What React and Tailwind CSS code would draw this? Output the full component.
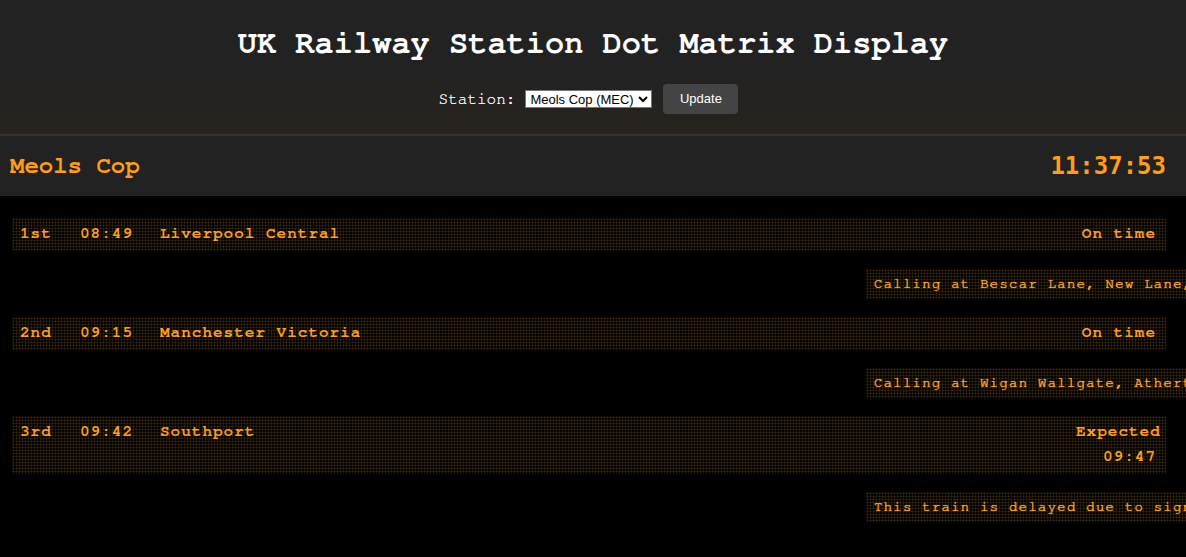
import { useState } from "react";

const services = [
  {
    pos: "1st",
    time: "08:49",
    dest: "Liverpool Central",
    status: "On time",
    calling: "Calling at Bescar Lane, New Lane, Burscough Bridge, Hoscar, Parbold, Appley Bridge, Gathurst, Orrell, Pemberton, Wigan Wallgate",
  },
  {
    pos: "2nd",
    time: "09:15",
    dest: "Manchester Victoria",
    status: "On time",
    calling: "Calling at Wigan Wallgate, Atherton, Walkden, Salford Crescent, Salford Central, Manchester Victoria",
  },
  {
    pos: "3rd",
    time: "09:42",
    dest: "Southport",
    status: "Expected 09:47",
    calling: "This train is delayed due to signalling problems",
  },
];

const dots =
  "bg-[#050302] bg-[radial-gradient(circle,#37280c_0.8px,transparent_1.2px)] bg-size-[3px_3px]";

const mono = "font-['Nimbus_Mono_PS','FreeMono','Courier_New','Liberation_Mono',monospace]";

const App = () => {
  const [station, setStation] = useState("MEC");

  return (
    <div className="min-h-screen w-full overflow-hidden bg-black">
      {/* header */}
      <div className="bg-linear-to-b from-[#222222] via-[#222222] to-[#27231e] pt-[25px] pb-[20px] border-b-2 border-[#37332e]">
        <h1 className={`text-center text-white text-[32px] leading-[36px] font-bold ${mono}`}>
          UK Railway Station Dot Matrix Display
        </h1>
        <div className="mt-[23px] flex items-center justify-center h-[30px]">
          <label className={`text-[#f2f2f2] text-[16px] mr-[10px] [text-shadow:0_0_0.6px_#ffffff] ${mono}`}>
            Station:
          </label>
          <select
            value={station}
            onChange={(e) => setStation(e.target.value)}
            className="bg-white text-black text-[13px] h-[18px] w-[127px] border border-[#767676] font-['Liberation_Sans',Arial,sans-serif]"
          >
            <option value="MEC">Meols Cop (MEC)</option>
            <option value="SOP">Southport (SOP)</option>
            <option value="LIV">Liverpool Central (LVC)</option>
          </select>
          <button className="ml-[11px] mr-[9px] h-[30px] w-[75px] rounded-[4px] bg-[#444444] text-white text-[13px] font-['Liberation_Sans',Arial,sans-serif]">
            Update
          </button>
        </div>
      </div>

      {/* station bar */}
      <div className="h-[60px] bg-[#222222] flex items-center justify-between pl-[10px] pr-[20px]">
        <div className={`text-[#ff9d1a] text-[24px] font-bold ${mono}`}>
          Meols Cop
        </div>
        <div className="text-[#ff9d1a] text-[24px] font-bold font-['DejaVu_Sans_Mono',monospace]">
          11:37:53
        </div>
      </div>

      {/* departures */}
      <div className="pt-[22px] pl-[12px] pr-[20px] flex flex-col gap-[18px]">
        {services.map((s) => (
          <div key={s.pos} className="flex flex-col gap-[18px]">
            <div
              className={`${dots} flex pt-[3px] pb-[5px] pl-[8px] pr-[10px] text-[#ff9f1a] text-[16px] leading-[25px] tracking-[1px] font-bold ${mono}`}
            >
              <div className="w-[60px] shrink-0">{s.pos}</div>
              <div className="w-[80px] shrink-0">{s.time}</div>
              <div className="flex-1">{s.dest}</div>
              <div className="w-[80px] shrink-0 text-right">{s.status}</div>
            </div>
            <div className="flex">
              <div
                className={`${dots} ml-[854px] shrink-0 whitespace-nowrap py-[5px] px-[8px] text-[#ffa42a] text-[14px] leading-[20px] tracking-[1.25px] [text-shadow:0_0_0.8px_#ffa42a,0_0_0.8px_#ffa42a] ${mono}`}
              >
                {s.calling}
              </div>
            </div>
          </div>
        ))}
      </div>
    </div>
  );
};

export default App;
